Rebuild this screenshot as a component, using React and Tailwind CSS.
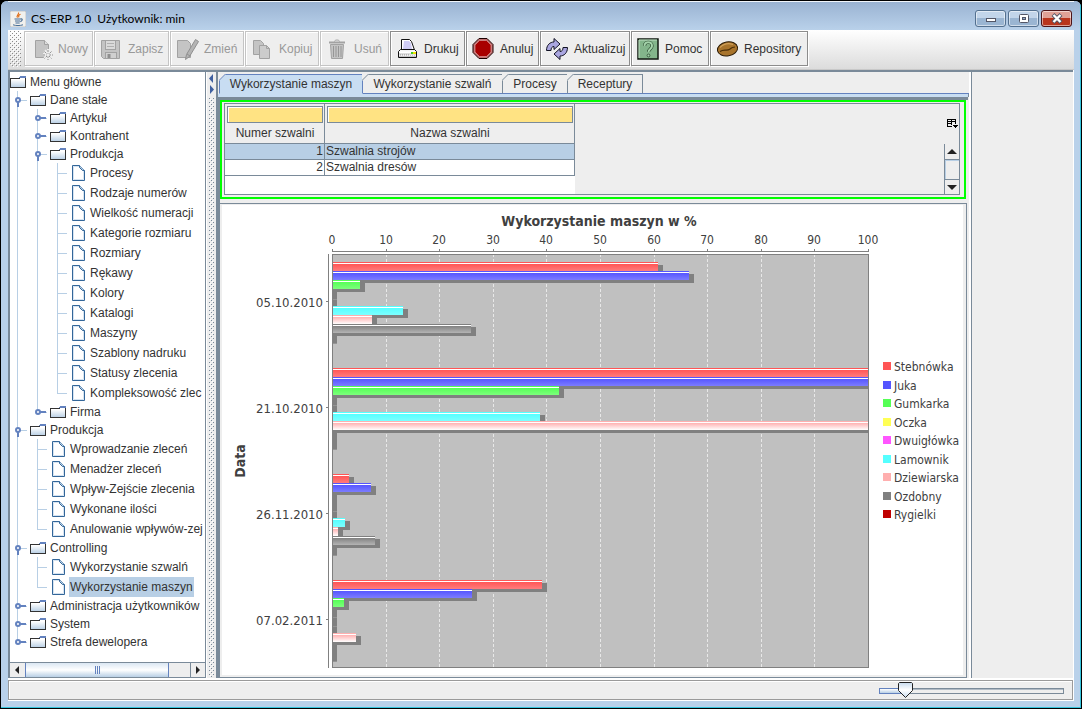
import { useState } from 'react'
import clsx from 'clsx'

const toolbarButtons = [
  { label: 'Nowy', icon: 'new', width: 'w-[69px]', disabled: true },
  { label: 'Zapisz', icon: 'save', width: 'w-[75px]', disabled: true },
  { label: 'Zmień', icon: 'edit', width: 'w-[74px]', disabled: true },
  { label: 'Kopiuj', icon: 'copy', width: 'w-[74px]', disabled: true },
  { label: 'Usuń', icon: 'trash', width: 'w-[69px]', disabled: true },
  { label: 'Drukuj', icon: 'print', width: 'w-[75px]' },
  { label: 'Anuluj', icon: 'stop', width: 'w-[73px]' },
  { label: 'Aktualizuj', icon: 'refresh', width: 'w-[90px]' },
  { label: 'Pomoc', icon: 'help', width: 'w-[78px]' },
  { label: 'Repository', icon: 'bean', width: 'w-[98px]' },
]

const tree = {
  label: 'Menu główne',
  children: [
    {
      label: 'Dane stałe',
      children: [
        { label: 'Artykuł', folder: true },
        { label: 'Kontrahent', folder: true },
        {
          label: 'Produkcja',
          children: [
            { label: 'Procesy' },
            { label: 'Rodzaje numerów' },
            { label: 'Wielkość numeracji' },
            { label: 'Kategorie rozmiaru' },
            { label: 'Rozmiary' },
            { label: 'Rękawy' },
            { label: 'Kolory' },
            { label: 'Katalogi' },
            { label: 'Maszyny' },
            { label: 'Szablony nadruku' },
            { label: 'Statusy zlecenia' },
            { label: 'Kompleksowość zlec' },
          ],
        },
        { label: 'Firma', folder: true },
      ],
    },
    {
      label: 'Produkcja',
      children: [
        { label: 'Wprowadzanie zleceń' },
        { label: 'Menadżer zleceń' },
        { label: 'Wpływ-Zejście zlecenia' },
        { label: 'Wykonane ilości' },
        { label: 'Anulowanie wpływów-zej' },
      ],
    },
    {
      label: 'Controlling',
      children: [{ label: 'Wykorzystanie szwalń' }, { label: 'Wykorzystanie maszyn' }],
    },
    { label: 'Administracja użytkowników', folder: true },
    { label: 'System', folder: true },
    { label: 'Strefa dewelopera', folder: true },
  ],
}

const tabs = [
  { label: 'Wykorzystanie maszyn', width: 'w-[144px]' },
  { label: 'Wykorzystanie szwalń', width: 'w-[140px]' },
  { label: 'Procesy', width: 'w-[65px]' },
  { label: 'Receptury', width: 'w-[75px]' },
]

const rooms = [
  { id: 1, name: 'Szwalnia strojów' },
  { id: 2, name: 'Szwalnia dresów' },
]

const series = [
  { name: 'Stebnówka', color: '#ff5555', light: '#ff7c7c' },
  { name: 'Juka', color: '#5555ff', light: '#7c7cff' },
  { name: 'Gumkarka', color: '#55ff55', light: '#7cff7c' },
  { name: 'Oczka', color: '#ffff55', light: '#ffff7c' },
  { name: 'Dwuigłówka', color: '#ff55ff', light: '#ff7cff' },
  { name: 'Lamownik', color: '#55ffff', light: '#7cffff' },
  { name: 'Dziewiarska', color: '#ffafaf', light: '#ffffff' },
  { name: 'Ozdobny', color: '#808080', light: '#b4b4b4' },
  { name: 'Rygielki', color: '#c00000', light: '#e03030' },
]

const usage = [
  { date: '05.10.2010', values: [60.8, 66.6, 5.2, 0, 0, 13.2, 7.5, 25.9, 0] },
  { date: '21.10.2010', values: [100, 100, 42.4, 0, 0, 38.8, 100, 0, 0] },
  { date: '26.11.2010', values: [3.2, 7.3, 0, 0, 0, 2.4, 1.1, 8, 0] },
  { date: '07.02.2011', values: [39.1, 26.1, 2.2, 0, 0, 0, 4.5, 0, 0] },
]

function flatten(node, flags = []) {
  const row = { label: node.label, flags, open: !!node.children, folder: !!(node.folder || node.children) }
  const rows = [row]
  node.children?.forEach((child, i) => {
    rows.push(...flatten(child, [...flags, i === node.children.length - 1]))
  })
  return rows
}

const treeRows = flatten(tree)

function JavaIcon() {
  return (
    <svg width="16" height="16" viewBox="0 0 16 16">
      <rect width="16" height="16" rx="1" fill="#f1f1ee" stroke="#a9a9a9" strokeWidth="0.6" />
      <path d="M8.5 1.5c1 2-3 3-1 5.2M10.5 3.2c-2 1-2.4 1.8-1.4 3.2" fill="none" stroke="#e0701c" strokeWidth="1.2" />
      <path d="M4.5 8h6M5 10h5M5.5 12h4.2M10.5 8c2.6-.6 2 2-.2 2.6" fill="none" stroke="#476d95" strokeWidth="1.1" />
      <path d="M3 13.8c3 1 7 1 10 0" fill="none" stroke="#476d95" strokeWidth="1" />
    </svg>
  )
}

function ToolIcon({ name }) {
  const gray = { fill: '#c4c4c4', stroke: '#a2a2a2' }
  return (
    <svg width="24" height="24" viewBox="0 0 24 24" className="shrink-0">
      {name === 'new' && (
        <g {...gray}>
          <path d="M6.5 3.5h9l4 4v13h-13z" />
          <path d="M15.5 3.5v4h4" fill="#dddddd" />
          <path d="M19.5 12v11M14 17.5h11M15.6 13.6l7.8 7.8M23.4 13.6l-7.8 7.8" stroke="#eeeeee" strokeWidth="3" />
          <path d="M19 13v10M14 18h10M15.5 14.5l7 7M22.5 14.5l-7 7" stroke="#8f8f8f" strokeDasharray="2 1" />
          <circle cx="19" cy="18" r="1.5" fill="#eeeeee" stroke="none" />
        </g>
      )}
      {name === 'save' && (
        <g {...gray}>
          <path d="M2.5 3.5h18v18h-16l-2-2z" />
          <rect x="6.5" y="3.5" width="10" height="9" fill="#dadada" />
          <path d="M8 6.5h7M8 9.5h7" stroke="#b0b0b0" />
          <rect x="6.5" y="15.5" width="11" height="6" fill="#d0d0d0" />
          <rect x="8.5" y="17" width="3" height="4" fill="#8f8f8f" stroke="none" />
        </g>
      )}
      {name === 'edit' && (
        <g {...gray}>
          <path d="M2.5 3.5h10l3 3v14h-13z" />
          <path d="M20.5 2.5l3 2-9 15-4 3 1-5z" fill="#b4b4b4" stroke="#8f8f8f" />
          <path d="M12 17l3 2" stroke="#8f8f8f" />
        </g>
      )}
      {name === 'copy' && (
        <g {...gray}>
          <path d="M3.5 3.5h7l3 3v11h-10z" />
          <path d="M9.5 8.5h7l3 3v10h-10z" fill="#cccccc" />
          <path d="M16.5 8.5v3h3" fill="none" />
        </g>
      )}
      {name === 'trash' && (
        <g {...gray}>
          <path d="M5.5 7.5h13l-1 14h-11z" />
          <path d="M4 5.5h16" strokeWidth="2" />
          <path d="M9.5 4.5c0-2 5-2 5 0" fill="none" />
          <path d="M8.5 9v11M11 9v11M13.5 9v11M16 9v11" stroke="#969696" />
        </g>
      )}
      {name === 'print' && (
        <g stroke="#111111" strokeLinejoin="round">
          <path d="M6.5 2.5h8l2 2 3 8.5h-13z" fill="#ffffff" />
          <path d="M9 4h5l2 2 1 6H8z" fill="#cfccf5" stroke="none" />
          <path d="M5.5 12.5h14l2 2v6h-18v-6z" fill="#f4f4f4" />
          <path d="M4 14.5h17v1.5H4z" fill="#ffffff" stroke="none" />
          <path d="M5 17.5h9M5 19h15" stroke="#a0a0a0" strokeDasharray="1 1" />
          <path d="M4 17h17M4 19.5h17" stroke="#c9c9c9" />
          <path d="M18 16h3" stroke="#f1e400" strokeWidth="2" />
          <path d="M16 16h2" stroke="#44cc22" strokeWidth="2" />
        </g>
      )}
      {name === 'stop' && (
        <g>
          <path d="M8 1.5h8l6 6v8l-6 6H8l-6-6v-8z" fill="#c07070" stroke="#1a0000" />
          <path d="M8.5 3.5h7L20 8v7l-4.500 4.500h-7L4 15V8z" fill="#a80000" stroke="#d89a9a" strokeWidth="0.7" />
        </g>
      )}
      {name === 'refresh' && (
        <g fill="#aaa6e0" stroke="#111122" strokeLinejoin="round">
          <path d="M1.500 13.500C1.500 8 5 5 9 5V1.500L15 7l-6 5.500V9.500C7 9.500 6 11 6 13.500z" />
          <path d="M1.500 13.500C1.500 8 5 5 9 5V1.500L15 7l-6 5.500V9.500C7 9.500 6 11 6 13.500z" transform="rotate(180 12 12)" />
        </g>
      )}
      {name === 'help' && (
        <g>
          <rect x="2" y="2" width="20" height="20" fill="#83b58b" stroke="#101810" strokeWidth="1.5" />
          <path d="M3 21V3h18" fill="none" stroke="#bfe0c3" />
          <path d="M8.500 9c0-5 7.500-5 7.500 0 0 3-3.500 3-3.500 6" fill="none" stroke="#2a4a30" strokeWidth="3.2" />
          <path d="M8.500 9c0-5 7.500-5 7.500 0 0 3-3.500 3-3.500 6" fill="none" stroke="#a4d3aa" strokeWidth="2" />
          <circle cx="12.5" cy="18.5" r="1.4" fill="#a4d3aa" stroke="#2a4a30" strokeWidth="0.8" />
        </g>
      )}
      {name === 'bean' && (
        <g>
          <ellipse cx="12.5" cy="12" rx="10.2" ry="7" transform="rotate(-10 12 12)" fill="#a8742c" stroke="#2a1a05" />
          <path d="M5 10.5c4-4 9-4.500 13-3" fill="none" stroke="#cfa05a" strokeWidth="1.2" />
          <path d="M5 14.5c4-3 7 0 10-2.500 2-2 3-2 5-2" fill="none" stroke="#4a2e08" strokeWidth="1.2" />
        </g>
      )}
    </svg>
  )
}

function ToolButton({ label, icon, width, disabled }) {
  return (
    <button
      type="button"
      disabled={disabled}
      className={clsx(
        'flex h-[35px] shrink-0 items-center gap-[5px] border bg-[#eeeeee] pl-1 text-left',
        'shadow-[inset_1px_1px_0_#ffffff,1px_1px_0_#ffffff]',
        width,
        disabled ? 'border-[#c4c4c4] text-[#999999]' : 'border-[#8c8c8c] text-[#333333]',
      )}
    >
      <ToolIcon name={icon} />
      {label}
    </button>
  )
}

// staggered dots on toolbar and split pane handles
function Grip({ id, color, className }) {
  return (
    <svg className={className} shapeRendering="crispEdges" aria-hidden="true">
      <defs>
        <pattern id={id} width="4" height="4" patternUnits="userSpaceOnUse">
          <rect x="0" y="0" width="1" height="1" fill={color} />
          <rect x="2" y="2" width="1" height="1" fill={color} />
          <rect x="1" y="1" width="1" height="1" fill="#ffffff" />
          <rect x="3" y="3" width="1" height="1" fill="#ffffff" />
        </pattern>
      </defs>
      <rect width="100%" height="100%" fill={`url(#${id})`} />
    </svg>
  )
}

function FolderIcon() {
  return (
    <svg width="16" height="14" viewBox="0 0 16 14" shapeRendering="crispEdges" className="shrink-0">
      <defs>
        <linearGradient id="folder" x1="0" y1="0" x2="0" y2="1">
          <stop offset="0.2" stopColor="#ffffff" />
          <stop offset="1" stopColor="#b8cfe5" />
        </linearGradient>
      </defs>
      <path d="M0.5 3.5h9l1-1h5v10h-15z" fill="url(#folder)" stroke="#333333" />
      <path d="M10 1h6v2h-7z" fill="#6382bf" />
      <path d="M1 4.5h9l1-1h4" fill="none" stroke="#ffffff" />
    </svg>
  )
}

function FileIcon() {
  return (
    <svg width="16" height="16" viewBox="0 0 16 16" className="shrink-0">
      <path d="M2.5 0.5h7l5 5v10h-12z" fill="#ffffff" stroke="#336699" />
      <path d="M3.5 1.5h5.500l4.500 4.500v8.500h-10z" fill="none" stroke="#d5e3f1" />
      <path d="M9.5 0.5v2l3 3h2" fill="#b8cfe5" stroke="#336699" />
    </svg>
  )
}

function Guide({ tall, kind, handle, open }) {
  const height = tall ? 20 : 18
  const mid = height / 2
  return (
    <svg width="20" height={height} shapeRendering="crispEdges" className="shrink-0">
      {kind !== 'blank' && <rect x="7" y="0" width="1" height={kind === 'elbow' ? mid : height} fill="#b8cfe5" />}
      {(kind === 'tee' || kind === 'elbow') && <rect x="7" y={mid} width="10" height="1" fill="#b8cfe5" />}
      {handle && (
        <g shapeRendering="auto">
          <path d={open ? 'M8 11v5' : 'M10 9h6'} stroke="#6382bf" strokeWidth="2" />
          <circle cx="8" cy="9" r="2" fill="#ffffff" stroke="#6382bf" strokeWidth="2" />
        </g>
      )}
    </svg>
  )
}

function TreeRow({ row, selected, onSelect }) {
  const depth = row.flags.length
  const tall = !row.folder
  return (
    <li className={clsx('flex items-center', tall ? 'h-5' : 'h-[18px]')}>
      {row.flags.map((last, i) => {
        const own = i === depth - 1
        let kind = last ? 'blank' : 'line'
        if (own) kind = last ? 'elbow' : 'tee'
        return <Guide key={i} tall={tall} kind={kind} handle={own && row.folder} open={row.open} />
      })}
      {row.folder ? <FolderIcon /> : <FileIcon />}
      <button
        type="button"
        onClick={onSelect}
        className={clsx('ml-[3px] h-full whitespace-nowrap px-px', selected && 'bg-[#b8cfe5]')}
      >
        {row.label}
      </button>
    </li>
  )
}

function Arrow({ dir }) {
  const paths = {
    left: 'M6 1v8L2 5z',
    right: 'M3 1v8l4-4z',
    up: 'M0 7h10L5 2z',
    down: 'M0 3h10L5 8z',
  }
  return (
    <svg width="10" height="10" viewBox="0 0 10 10">
      <path d={paths[dir]} fill="#222222" />
    </svg>
  )
}

function Sidebar() {
  const [selected, setSelected] = useState('Wykorzystanie maszyn')
  return (
    <nav className="flex w-[199px] shrink-0 flex-col border-r border-l-2 border-r-white border-l-[#7a8a99] bg-white">
      <ul className="flex-1 overflow-hidden border-r border-[#7a8a99] pt-px">
        {treeRows.map((row, i) => (
          <TreeRow
            key={i}
            row={row}
            selected={row.label === selected}
            onSelect={() => setSelected(row.label)}
          />
        ))}
      </ul>
      <div className="flex h-4 shrink-0 border border-l-0 border-[#7a8a99] bg-[#eeeeee]">
        <button type="button" aria-label="Przewiń w lewo" className="flex w-[15px] items-center justify-center">
          <Arrow dir="left" />
        </button>
        <div className="flex flex-1">
          <div className="flex w-36 items-center justify-center gap-px border-x border-[#6382bf] bg-linear-to-b from-[#dbe7f3] via-white to-[#b8cfe5]">
            <span className="h-2 w-px bg-[#6382bf]" />
            <span className="h-2 w-px bg-[#6382bf]" />
            <span className="h-2 w-px bg-[#6382bf]" />
          </div>
        </div>
        <button
          type="button"
          aria-label="Przewiń w prawo"
          className="flex w-[15px] items-center justify-center border-l border-[#7a8a99]"
        >
          <Arrow dir="right" />
        </button>
      </div>
    </nav>
  )
}

function Divider() {
  return (
    <div className="flex w-[9px] shrink-0 flex-col items-center bg-[#eeeeee] pb-px">
      <svg width="9" height="26" className="shrink-0">
        <path d="M6 2v9L2 6.500z" fill="#4060a0" />
        <path d="M3 13v9l4-4.500z" fill="#4060a0" />
      </svg>
      <Grip id="split-grip" color="#7a8a99" className="min-h-0 w-[5px] flex-1" />
    </div>
  )
}

function TabBar() {
  const [active, setActive] = useState(0)
  return (
    <div>
      <div role="tablist" className="flex items-end pt-[2px] pl-px">
        {tabs.map((tab, i) => (
          <button
            key={tab.label}
            type="button"
            role="tab"
            aria-selected={i === active}
            onClick={() => setActive(i)}
            className={clsx(
              'relative h-5 shrink-0 border-t border-r border-b text-center',
              tab.width,
              i === active
                ? 'border-l border-[#6382bf] border-b-[#c8ddf2] bg-[#c8ddf2]'
                : 'border-t-[#7a8a99] border-r-[#7a8a99] border-b-[#6382bf] bg-[#eeeeee]',
            )}
          >
            <svg width="7" height="7" className="absolute -top-px -left-px">
              <path d="M0 0h7L0 7z" fill="#eeeeee" />
              <path d="M0 6.5L6.5 0" stroke={i === active ? '#6382bf' : '#7a8a99'} />
            </svg>
            {tab.label}
          </button>
        ))}
        <div className="h-px flex-1 bg-[#6382bf]" />
      </div>
      <div className="h-[3px] border-r border-[#7a8a99] bg-[#c8ddf2]" />
    </div>
  )
}

function FilterHead({ label, width }) {
  return (
    <th className={clsx('border-r border-b border-[#7a8a99] bg-[#eeeeee] p-0 font-normal', width)}>
      <div className="flex h-[39px] flex-col pt-[2px] pr-px pl-[2px]">
        <input
          type="text"
          aria-label={label}
          className="h-5 w-full border border-[#7a8a99] bg-[#ffe383] shadow-[inset_1px_1px_0_#ffffff]"
        />
        <span className="text-center leading-5">{label}</span>
      </div>
    </th>
  )
}

function RoomTable() {
  const [selected, setSelected] = useState(1)
  return (
    <div className="border-2 border-[#00ff00] bg-[#eeeeee] pt-px pr-[4px] pb-[2px] pl-[2px]">
      <div className="flex h-[92px] border border-[#7a8a99]">
        <div className="w-[350px] bg-white">
          <table className="w-full table-fixed border-separate border-spacing-0">
            <thead>
              <tr>
                <FilterHead label="Numer szwalni" width="w-[100px]" />
                <FilterHead label="Nazwa szwalni" width="w-[250px]" />
              </tr>
            </thead>
            <tbody>
              {rooms.map((room) => (
                <tr
                  key={room.id}
                  onClick={() => setSelected(room.id)}
                  className={room.id === selected ? 'bg-[#b8cfe5]' : 'bg-white'}
                >
                  <td className="h-4 border-r border-b border-[#7a8a99] px-px py-0 text-right leading-[15px]">
                    {room.id}
                  </td>
                  <td className="h-4 border-r border-b border-[#7a8a99] px-px py-0 leading-[15px]">{room.name}</td>
                </tr>
              ))}
            </tbody>
          </table>
        </div>
        <div className="flex flex-1 flex-col items-end">
          <button type="button" aria-label="Kolumny" className="flex h-10 w-[14px] items-center justify-center">
            <svg width="11" height="10" viewBox="0 0 11 10" shapeRendering="crispEdges">
              <path d="M0 0h9v5H8V1H1v6h4v1H0z" fill="#000000" />
              <path d="M0 2h9v1H0zM4 0h1v6H4zM1 4h3v1H1z" fill="#000000" />
              <path d="M5 6h6L8 9z" fill="#000000" />
            </svg>
          </button>
          <div className="flex w-[15px] flex-1 flex-col border-l border-[#7a8a99]">
            <button type="button" aria-label="Przewiń w górę" className="flex h-4 items-center justify-center border-b border-[#7a8a99]">
              <Arrow dir="up" />
            </button>
            <div className="flex-1 border-t border-l border-[#b8cfe5]" />
            <button type="button" aria-label="Przewiń w dół" className="flex h-[15px] items-center justify-center border-t border-[#7a8a99]">
              <Arrow dir="down" />
            </button>
          </div>
        </div>
      </div>
    </div>
  )
}

const plot = { x: 110, y: 49, width: 536, height: 413 }
const scaleX = (value) => Math.round((value / 100) * plot.width)

function Bar({ x, y, value, index }) {
  const width = scaleX(value)
  const { color } = series[index]
  return (
    <g>
      <rect x={x} y={y + 3} width={Math.min(width + 5, plot.width)} height="9" fill="#808080" />
      {width === 0 && <rect x={x} y={y + 11} width="5" height="1" fill="#949494" />}
      {width > 0 && (
        <>
          <rect x={x} y={y} width={width} height="9" fill={`url(#bar-${index})`} />
          <rect x={x} y={y} width={width} height="1" fill={color} />
          <rect x={x} y={y + 1} width={width} height="1" fill="#ffffff" />
        </>
      )}
    </g>
  )
}

function UsageChart() {
  const ticks = [0, 10, 20, 30, 40, 50, 60, 70, 80, 90, 100]
  return (
    <svg
      viewBox="0 0 741 470"
      preserveAspectRatio="xMinYMin meet"
      className="block h-full w-full bg-white font-['DejaVu_Sans_Condensed','DejaVu_Sans',sans-serif]"
      shapeRendering="crispEdges"
      fill="#404040"
    >
      <defs>
        {series.map((item, i) => (
          <linearGradient key={item.name} id={`bar-${i}`} x1="0" y1="0" x2="0" y2="1">
            <stop offset="0.2" stopColor={item.color} />
            <stop offset="1" stopColor={item.light} />
          </linearGradient>
        ))}
      </defs>

      <text x="377" y="21" textAnchor="middle" fontSize="14" fontWeight="bold">
        Wykorzystanie maszyn w %
      </text>
      <text transform="translate(23 256) rotate(-90)" textAnchor="middle" fontSize="14" fontWeight="bold">
        Data
      </text>

      {/* value axis */}
      <rect x={plot.x} y="46" width={plot.width + 1} height="1" fill="#808080" />
      {ticks.map((tick) => (
        <g key={tick}>
          <rect x={plot.x + scaleX(tick)} y="44" width="1" height="2" fill="#808080" />
          <text x={plot.x + scaleX(tick)} y="39" textAnchor="middle" fontSize="12">
            {tick}
          </text>
        </g>
      ))}

      {/* category axis */}
      <rect x="106" y={plot.y} width="1" height={plot.height + 1} fill="#808080" />
      {usage.map((day, i) => (
        <g key={day.date}>
          <rect x="104" y={96 + i * 106} width="2" height="1" fill="#808080" />
          <text x="101" y={102 + i * 106} textAnchor="end" fontSize="13">
            {day.date}
          </text>
        </g>
      ))}

      <rect x={plot.x} y={plot.y} width={plot.width} height={plot.height} fill="#c0c0c0" />
      {ticks.slice(1, -1).map((tick) => (
        <path
          key={tick}
          d={`M${plot.x + scaleX(tick) + 0.5} ${plot.y}v${plot.height}`}
          stroke="#e8e8e8"
          strokeDasharray="3 2"
        />
      ))}
      {usage.map((day, i) =>
        day.values.map((value, j) => (
          <Bar key={`${day.date}-${j}`} x={plot.x} y={57 + i * 106 + Math.round(j * 8.8)} value={value} index={j} />
        )),
      )}
      <rect
        x={plot.x + 0.5}
        y={plot.y + 0.5}
        width={plot.width}
        height={plot.height}
        fill="none"
        stroke="#808080"
      />

      {series.map((item, i) => {
        const y = Math.round(i * 18.5)
        return (
          <g key={item.name}>
            <rect x="661" y={157 + y} width="8" height="8" fill={item.color} />
            <text x="672" y={166 + y} fontSize="12">
              {item.name}
            </text>
          </g>
        )
      })}
    </svg>
  )
}

function WindowButton({ label, children, danger }) {
  return (
    <button
      type="button"
      aria-label={label}
      className={clsx(
        'flex h-[17px] w-[31px] items-center justify-center rounded-[3px] border shadow-[inset_0_0_0_1px_#ffffff88]',
        danger
          ? 'border-[#4c1418] bg-linear-to-b from-[#e0a196] from-45% to-[#b9351d] to-50%'
          : 'border-[#53708f] bg-linear-to-b from-[#c2d5ea] from-45% to-[#9ab5d2] to-50%',
      )}
    >
      <svg width="14" height="11" viewBox="0 0 14 11">
        {children}
      </svg>
    </button>
  )
}

function TitleBar() {
  return (
    <header className="flex h-[29px] shrink-0 items-center border-t border-white/80 bg-linear-to-b from-[#9ab3d2] to-[#b9d1ea] pt-[6px] pr-[2px] pl-[2px]">
      <JavaIcon />
      <h1 className="flex-1 pl-[5px] font-['Lato','Open_Sans',sans-serif] text-xs whitespace-pre text-black">
        CS-ERP 1.0{'  '}Użytkownik: min
      </h1>
      <div className="flex gap-[2px] pb-px">
        <WindowButton label="Minimalizuj">
          <rect x="2.5" y="5.5" width="9" height="3" fill="#ffffff" stroke="#535666" />
        </WindowButton>
        <WindowButton label="Maksymalizuj">
          <rect x="2.5" y="1.5" width="9" height="8" rx="1" fill="#ffffff" stroke="#535666" />
          <rect x="5.5" y="4.5" width="3" height="2" fill="#8fa9c8" stroke="#535666" />
        </WindowButton>
        <WindowButton label="Zamknij" danger>
          <path d="M3 1.5l8 8M11 1.5l-8 8" stroke="#535666" strokeWidth="4" />
          <path d="M3.5 2l7 7M10.5 2l-7 7" stroke="#ffffff" strokeWidth="2.4" />
        </WindowButton>
      </div>
    </header>
  )
}

function StatusBar() {
  const [zoom, setZoom] = useState(10)
  return (
    <footer className="mt-[2px] mr-px mb-px flex h-5 shrink-0 items-center justify-end border border-[#9a9a9a] bg-[#eeeeee] pr-2 shadow-[inset_1px_1px_0_#ffffff]">
      <div className="relative h-4 w-[185px]">
        <div className="mt-[6px] flex h-[6px] border border-[#7a8a99] bg-[#eeeeee] shadow-[inset_0_1px_0_#b0bac4]">
          <div
            className="-m-px border border-[#6382bf] bg-linear-to-b from-white to-[#b8cfe5]"
            style={{ width: `${zoom + 4}%` }}
          />
        </div>
        <svg width="15" height="16" className="absolute top-0" style={{ left: `${zoom * 0.92 + 1}%` }}>
          <defs>
            <linearGradient id="thumb" x1="0" y1="0" x2="0" y2="1">
              <stop offset="0" stopColor="#c8dbee" />
              <stop offset="0.5" stopColor="#ffffff" />
              <stop offset="1" stopColor="#c8dbee" />
            </linearGradient>
          </defs>
          <path d="M1.5 0.5h12l1 1v7l-7 7-7-7v-7z" fill="url(#thumb)" stroke="#222222" />
        </svg>
        <input
          type="range"
          aria-label="Powiększenie"
          value={zoom}
          onChange={(e) => setZoom(Number(e.target.value))}
          className="absolute inset-0 h-full w-full opacity-0"
        />
      </div>
    </footer>
  )
}

export default function App() {
  return (
    <div className="h-screen bg-black font-['Liberation_Sans',Arial,sans-serif] text-xs text-[#333333]">
      <div className="flex h-full flex-col overflow-hidden rounded-t-[7px] border border-black">
        <div className="flex min-h-0 flex-1 flex-col border-r border-b border-[#35c5dd] bg-[#b9d1ea] pr-[6px] pb-[6px] pl-[7px]">
          <div className="-mr-[6px] -ml-[7px] bg-linear-to-b from-[#9ab3d2] to-[#b9d1ea] pr-[6px] pl-[7px]">
            <TitleBar />
          </div>

          <div className="flex min-h-0 flex-1 flex-col bg-white">
            <div className="flex h-10 shrink-0 items-start gap-px border-b border-[#c8c8c8] bg-linear-to-b from-white to-[#dcdcdc] pt-px">
              <Grip id="toolbar-grip" color="#8a8a8a" className="mx-[2px] h-9 w-[11px]" />
              {toolbarButtons.map((button) => (
                <ToolButton key={button.label} {...button} />
              ))}
            </div>

            <div className="mr-px flex min-h-0 flex-1 border-t-2 border-[#7a8a99] bg-[#eeeeee]">
              <Sidebar />
              <Divider />
              <main className="flex min-w-0 flex-1 flex-col border-l-2 border-[#7a8a99]">
                <TabBar />
                <div className="mr-px flex min-h-0 flex-1 flex-col border-t-[3px] border-l-2 border-[#7a8a99] pr-[2px]">
                  <RoomTable />
                  <div className="mt-1 -mr-px flex min-h-0 flex-1 border-t border-r border-b border-[#7a8a99] pt-px pr-[3px] pb-[2px] pl-[2px]">
                    <UsageChart />
                  </div>
                </div>
              </main>
              <aside className="w-[104px] shrink-0 border-l-2 border-white">
                <div className="h-full border-l border-[#7a8a99]" />
              </aside>
            </div>

            <StatusBar />
          </div>
        </div>
      </div>
    </div>
  )
}
